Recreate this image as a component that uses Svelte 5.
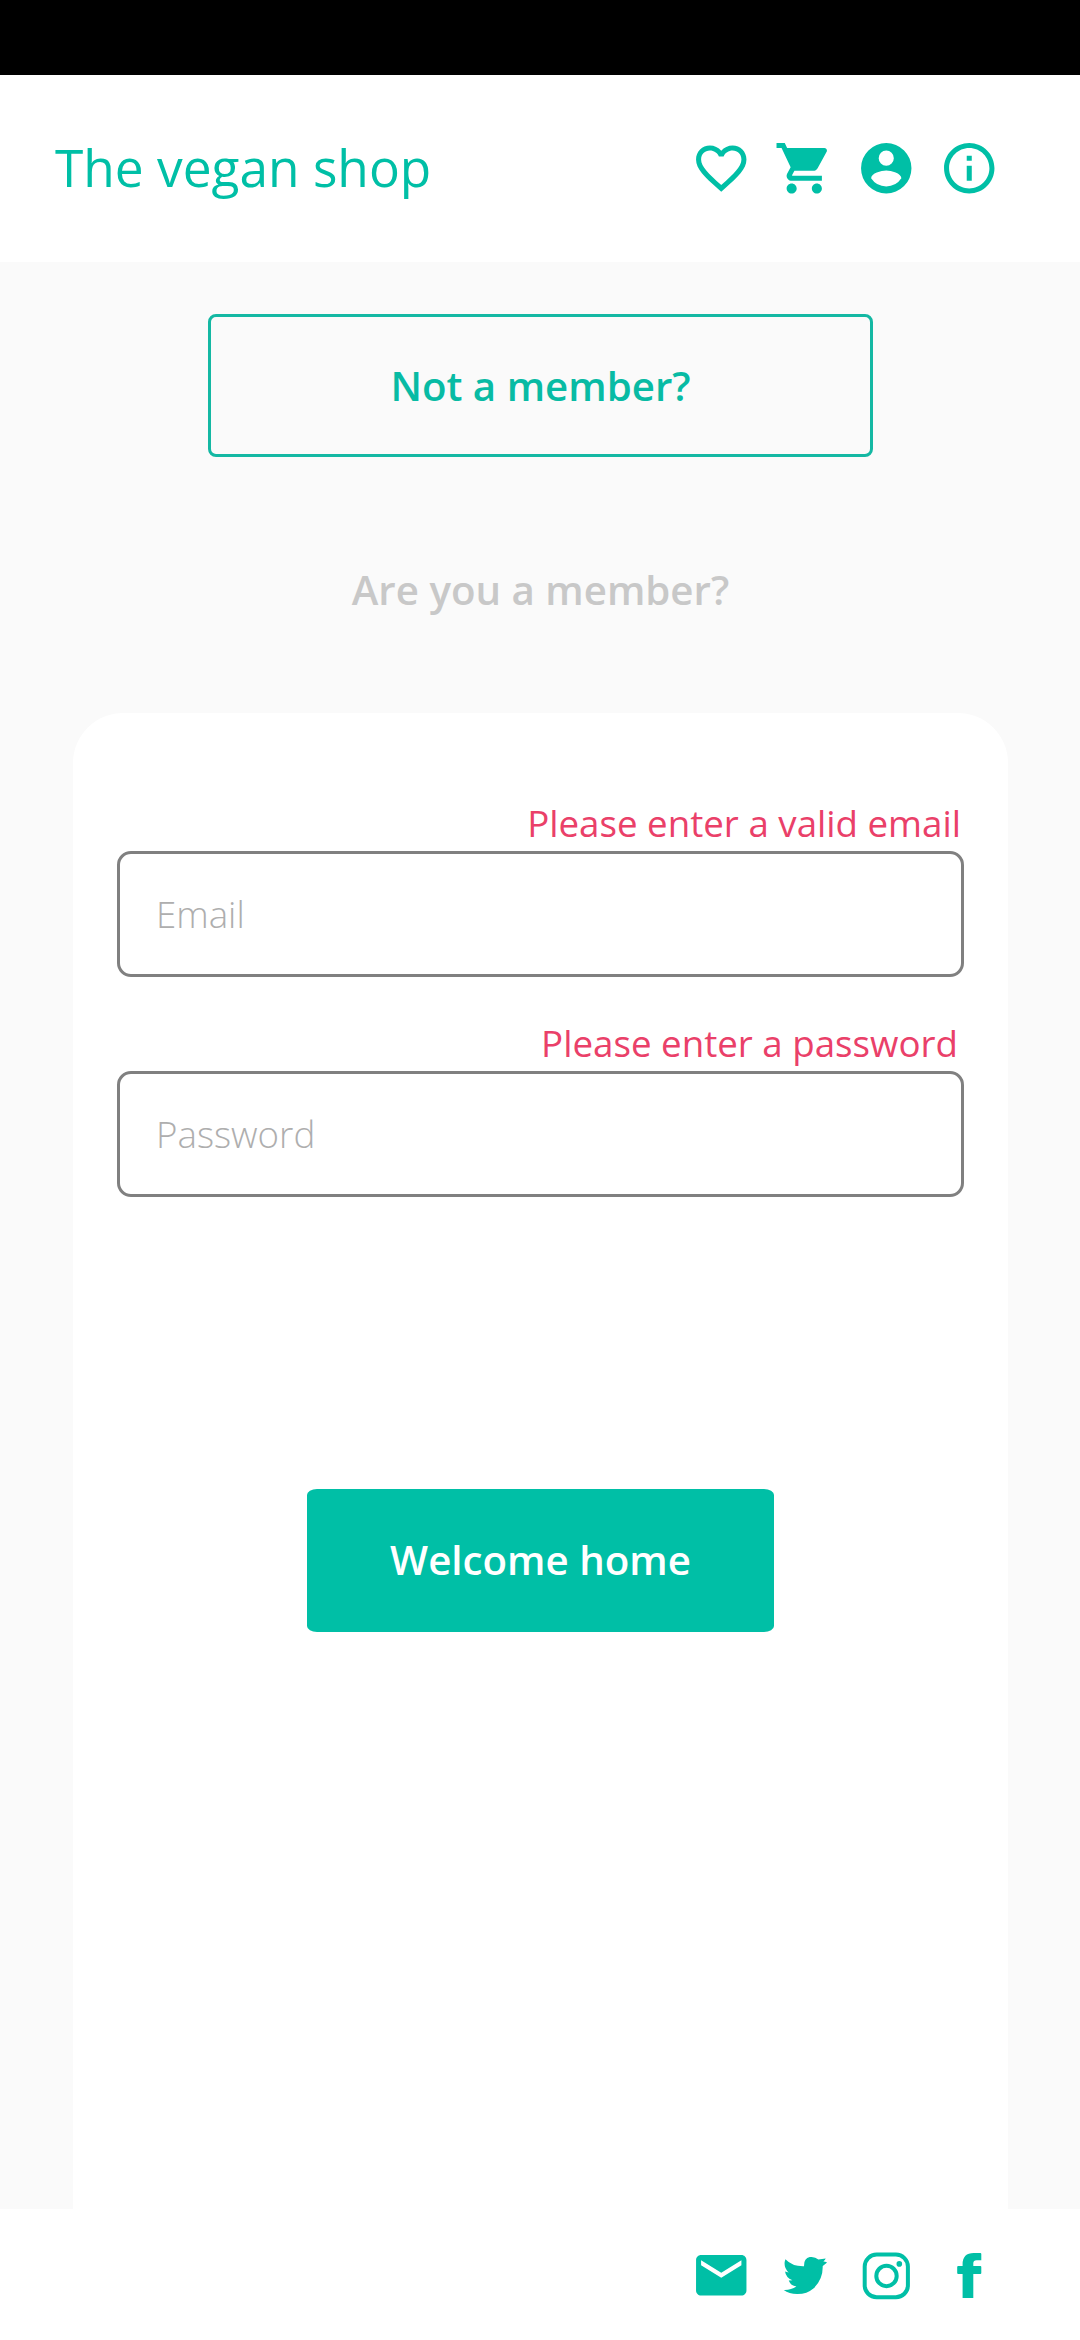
<script>
  let email = $state('');
  let password = $state('');
</script>

<div class="app">
  <div class="status"></div>

  <header class="bar">
    <h1>The vegan shop</h1>
    <nav class="icons">
      <svg viewBox="0 0 24 24"><path d="M16.5 3c-1.74 0-3.41.81-4.5 2.09C10.91 3.81 9.24 3 7.5 3 4.42 3 2 5.42 2 8.5c0 3.78 3.4 6.86 8.55 11.54L12 21.35l1.45-1.32C18.6 15.36 22 12.28 22 8.5 22 5.42 19.58 3 16.5 3zm-4.4 15.55l-.1.1-.1-.1C7.14 14.24 4 11.39 4 8.5 4 6.5 5.5 5 7.5 5c1.54 0 3.04.99 3.57 2.36h1.87C13.46 5.99 14.96 5 16.5 5c2 0 3.5 1.5 3.5 3.5 0 2.89-3.14 5.74-7.9 10.05z" /></svg>
      <svg viewBox="0 0 24 24"><path d="M7 18c-1.1 0-1.99.9-1.99 2S5.9 22 7 22s2-.9 2-2-.9-2-2-2zM1 2v2h2l3.6 7.59-1.35 2.45c-.16.28-.25.61-.25.96 0 1.1.9 2 2 2h12v-2H7.42c-.14 0-.25-.11-.25-.25l.03-.12.9-1.63h7.45c.75 0 1.41-.41 1.75-1.03l3.58-6.49c.08-.14.12-.31.12-.48 0-.55-.45-1-1-1H5.21l-.94-2H1zm16 16c-1.1 0-1.99.9-1.99 2s.89 2 1.99 2 2-.9 2-2-.9-2-2-2z" /></svg>
      <svg viewBox="0 0 24 24"><path fill-rule="evenodd" d="M12 2a10 10 0 1 0 0 20 10 10 0 0 0 0-20zm0 3a3 3 0 1 1 0 6 3 3 0 0 1 0-6zm0 14.2a7.2 7.2 0 0 1-6-3.22c.03-1.99 4-3.08 6-3.08 1.99 0 5.97 1.09 6 3.08a7.2 7.2 0 0 1-6 3.22z" /></svg>
      <svg viewBox="0 0 24 24"><path d="M11 7h2v2h-2zm0 4h2v6h-2zm1-9C6.48 2 2 6.48 2 12s4.48 10 10 10 10-4.48 10-10S17.52 2 12 2zm0 18c-4.41 0-8-3.59-8-8s3.59-8 8-8 8 3.59 8 8-3.59 8-8 8z" /></svg>
    </nav>
  </header>

  <main>
    <button class="outline">Not a member?</button>
    <p class="prompt">Are you a member?</p>

    <form class="card">
      <p class="error">Please enter a valid email</p>
      <input type="text" placeholder="Email" bind:value={email} />
      <p class="error second">Please enter a password</p>
      <input type="password" placeholder="Password" bind:value={password} />
      <button type="button" class="submit">Welcome home</button>
    </form>
  </main>

  <footer class="bar">
    <nav class="icons">
      <svg viewBox="0 0 24 24"><path d="M20 4H4c-1.1 0-1.99.9-1.99 2L2 18c0 1.1.9 2 2 2h16c1.1 0 2-.9 2-2V6c0-1.1-.9-2-2-2zm0 4l-8 5-8-5V6l8 5 8-5v2z" /></svg>
      <svg viewBox="-7.2 -15.75 181.5 181.5"><path d="M27 27Q48 49 83 48Q82 24 100 20.5Q115 18 126 28Q137 27 148 25Q146 30 141 34Q147 34 152 37Q146 43 139 47Q140 88 112 114Q91 132 62 131.5Q38 131 22 119Q43 120 60 109Q43 107 37 91L48 90Q28 82 26 64L37 67Q19 50 27 27Z" /></svg>
      <svg viewBox="0 0 60.5 60.5"><g class="line"><rect x="8.7" y="9.6" width="43.2" height="42.7" rx="12" /><circle cx="30.5" cy="30.95" r="10.2" /></g><circle cx="43.3" cy="18.9" r="2.8" /></svg>
      <svg viewBox="0 0 60.5 60.5"><path d="M23.6 52.9V28.9H19.2Q18.2 28.9 18.2 27.9V21.9Q18.2 20.9 19.2 20.9H23.6V19Q23.6 8 34.8 7.9H41.3Q42.3 7.9 42.3 8.9V15.2H37.6Q34.3 15.2 34.3 18.3V20.9H41.3Q42.3 20.9 42.3 21.9V27.9Q42.3 28.9 41.3 28.9H34.3V52.9Z" /></svg>
    </nav>
  </footer>
</div>

<style>
  :global(body) { margin: 0; background: #fafafa; }

  .app {
    display: flex;
    flex-direction: column;
    width: 1080px;
    height: 2340px;
    overflow: hidden;
    background: #fafafa;
    font-family: "Open Sans", sans-serif;
    color: #00bfa6;
  }

  h1, p { margin: 0; }

  .status { height: 75px; background: #000; }

  .bar {
    box-sizing: border-box;
    display: flex;
    align-items: center;
    background: #fff;
  }

  header { height: 187px; padding: 0 81px 0 55px; }

  footer {
    height: 131px;
    justify-content: flex-end;
    padding: 1px 81px 0 55px;
  }

  h1 {
    font-size: 51.4px;
    font-weight: 400;
    line-height: 70px;
    padding-bottom: 3px;
  }

  .icons { display: flex; gap: 22px; margin-left: auto; }

  .icons svg {
    display: block;
    width: 60.5px;
    height: 60.5px;
    fill: currentColor;
  }

  .line { fill: none; stroke: currentColor; stroke-width: 4; }

  main {
    flex: 1;
    display: flex;
    flex-direction: column;
    align-items: center;
    padding: 52px 0 0 1px;
  }

  button {
    box-sizing: border-box;
    height: 143px;
    padding: 0;
    font: 600 40.25px/56px "Open Sans", sans-serif;
  }

  .outline {
    width: 665px;
    border: 3px solid #14b8a3;
    border-radius: 8px;
    background: transparent;
    color: #08bba4;
  }

  .prompt {
    margin: 105px 0 95px;
    color: #c8c8c8;
    font-size: 40.25px;
    font-weight: 600;
    line-height: 56px;
  }

  .card {
    box-sizing: border-box;
    flex: 1;
    display: flex;
    flex-direction: column;
    width: 935px;
    padding: 85px 44px 0;
    border-radius: 50px 50px 0 0;
    background: #fff;
  }

  .error {
    padding-right: 3px;
    margin-bottom: 3px;
    color: #ea4069;
    font-size: 36.7px;
    line-height: 50px;
    text-align: right;
  }

  .second { margin-top: 41px; padding-right: 6px; }

  input {
    box-sizing: border-box;
    width: 100%;
    height: 126px;
    padding: 0 36px;
    border: 3px solid #808080;
    border-radius: 14px;
    background: transparent;
    font: 300 36.7px "Open Sans", sans-serif;
    outline: none;
  }

  input::placeholder { color: #aeaeae; opacity: 1; }

  .submit {
    align-self: center;
    width: 467px;
    margin-top: 292px;
    padding-bottom: 2px;
    border: 0;
    border-radius: 10px / 6px;
    background: #00bfa6;
    color: #fff;
  }
</style>
